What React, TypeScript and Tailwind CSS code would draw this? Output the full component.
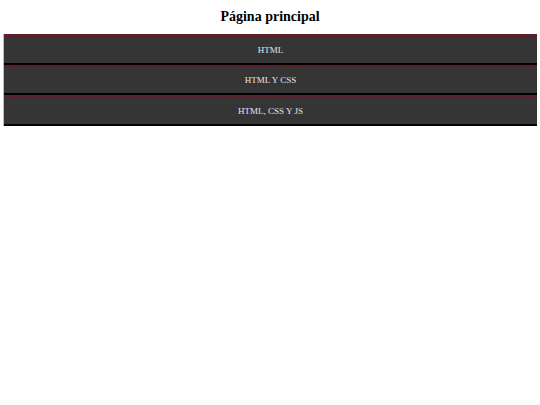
import React from 'react';

const items = ['HTML', 'HTML Y CSS', 'HTML, CSS Y JS'];

export default function App() {
  return (
    <div className="min-h-[405px] bg-white font-['Liberation_Serif',serif]">
      <h1 className="pt-[8px] pb-[8px] text-center text-[14px] font-bold leading-[18px] text-black">
        Página principal
      </h1>
      <ul className="mx-[3px] border-l border-[#bdbdbd]">
        {items.map((item) => (
          <li
            key={item}
            className="flex h-[30.7px] items-center justify-center border-t-[3px] border-b-2 border-t-[#5e1f2d] border-b-black bg-[#353535] pt-[1px] text-[9px] text-[#e6e6e6]"
          >
            {item}
          </li>
        ))}
      </ul>
    </div>
  );
}
